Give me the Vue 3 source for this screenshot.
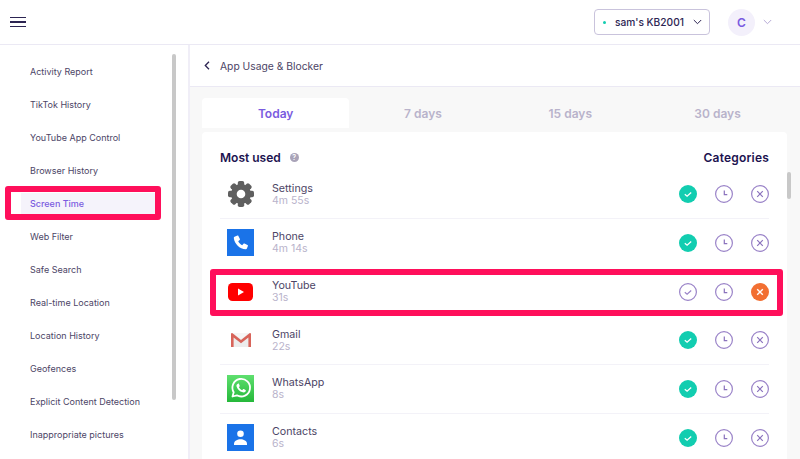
<script setup>
const menu = ['Activity Report','TikTok History','YouTube App Control','Browser History','Screen Time','Web Filter','Safe Search','Real-time Location','Location History','Geofences','Explicit Content Detection','Inappropriate pictures']
const tabs = ['Today','7 days','15 days','30 days']
const teeth = [0,45,90,135,180,225,270,315]
const apps = [
  { name:'Settings', time:'4m 55s', icon:'settings', state:'ok' },
  { name:'Phone', time:'4m 14s', icon:'phone', state:'ok' },
  { name:'YouTube', time:'31s', icon:'youtube', state:'block' },
  { name:'Gmail', time:'22s', icon:'gmail', state:'ok' },
  { name:'WhatsApp', time:'8s', icon:'whatsapp', state:'ok' },
  { name:'Contacts', time:'6s', icon:'contacts', state:'ok' },
]
</script>

<template>
  <div class="page">
    <header class="top">
      <button class="burger" aria-label="Menu"><span></span><span></span><span></span></button>
      <div class="device">
        <i class="dot"></i>
        <span class="device-name">sam's KB2001</span>
        <svg width="9" height="6" viewBox="0 0 9 6"><path d="M.8 1l3.7 3.7L8.2 1" fill="none" stroke="#2c2452" stroke-width="1"/></svg>
      </div>
      <div class="avatar">C</div>
      <svg class="avatar-chev" width="9" height="6" viewBox="0 0 9 6"><path d="M.8 1l3.7 3.7L8.2 1" fill="none" stroke="#b6aad6" stroke-width="1"/></svg>
    </header>

    <div class="body">
      <aside class="side">
        <a v-for="m in menu" :key="m" class="item" :class="{ active: m === 'Screen Time' }">{{ m }}</a>
        <div class="side-scroll"></div>
        <div class="mark mark-side"></div>
      </aside>

      <main class="main">
        <div class="crumb">
          <svg width="6" height="9" viewBox="0 0 6 9"><path d="M5 .8L1.300 4.500 5 8.200" fill="none" stroke="#2c2452" stroke-width="1.300"/></svg>
          <span>App Usage &amp; Blocker</span>
        </div>
        <div class="content">
          <div class="tabs">
            <div v-for="(t,i) in tabs" :key="t" class="tab" :class="{ on: i === 0 }">{{ t }}</div>
          </div>
          <section class="card">
            <div class="head">
              <h3>Most used</h3>
              <span class="help">?</span>
              <h3 class="cat">Categories</h3>
            </div>
            <div v-for="a in apps" :key="a.name" class="row">
              <div class="icon">
                <svg v-if="a.icon==='settings'" width="26" height="26" viewBox="-13 -13 26 26">
                  <g fill="#5f5f5f">
                    <circle r="10"/>
                    <rect v-for="t in teeth" :key="t" x="-3.200" y="-13" width="6.400" height="6" rx="1.800" :transform="`rotate(${t})`"/>
                  </g>
                  <circle r="4.300" fill="#fff"/>
                </svg>
                <svg v-else-if="a.icon==='phone'" width="27" height="27" viewBox="0 0 27 27"><rect width="27" height="27" fill="#1a73e8"/><path fill="#fff" d="M7.500 7.800l3-1.300c.4-.1.700 0 .9.400l1.500 3c.2.400.1.700-.2 1l-1.500 1.300c.9 1.800 2.200 3.100 4 4l1.300-1.500c.3-.3.600-.4 1-.2l3 1.500c.4.200.5.500.4.900l-1 2.700c-.2.500-.6.800-1.200.7C12.600 20 7.500 14.900 6.800 9c-.1-.6.200-1 .7-1.200z"/></svg>
                <svg v-else-if="a.icon==='youtube'" width="25" height="18" viewBox="0 0 25 18"><rect width="25" height="18" rx="4.500" fill="#f00"/><path d="M10 5.500v7l6-3.500z" fill="#fff"/></svg>
                <svg v-else-if="a.icon==='gmail'" width="20" height="14" viewBox="0 0 20 14"><path d="M1 .5h18V14H1z" fill="#ececec"/><path d="M2 0h16L10 6.500z" fill="#f6f6f6"/><path d="M0 1c0-.8.800-1.200 1.500-.7L10 6.900 18.500.3c.7-.5 1.500-.1 1.500.7v13h-2.600V4.600L10 10.200 2.600 4.600V14H0z" fill="#d8645a"/></svg>
                <svg v-else-if="a.icon==='whatsapp'" width="27" height="27" viewBox="0 0 27 27"><defs><linearGradient id="wa" x1="0" y1="0" x2="0" y2="1"><stop offset="0" stop-color="#5fe06f"/><stop offset="1" stop-color="#25b83a"/></linearGradient></defs><rect width="27" height="27" fill="url(#wa)"/><path d="M5.500 21.500l1.200-4.300a8.800 8.800 0 1 1 3.200 3.100z" fill="none" stroke="#fff" stroke-width="1.800" stroke-linejoin="round"/><path fill="#fff" d="M10.900 8.800c.4-.3.900-.3 1.100.2l.7 1.700c.1.300 0 .5-.2.800l-.6.700c.8 1.400 1.800 2.300 3.300 3l.8-.9c.2-.2.500-.3.800-.2l1.700.8c.4.200.5.600.3 1-.6 1.200-1.800 1.700-3 1.400-3.300-.8-5.600-3-6.300-6-.2-1.100.3-2 1.400-2.500z"/></svg>
                <svg v-else width="27" height="27" viewBox="0 0 27 27"><rect width="27" height="27" fill="#1a73e8"/><circle cx="13.500" cy="9.800" r="3.300" fill="#fff"/><path d="M7 19.800c0-3 3.500-4.600 6.500-4.600s6.500 1.600 6.500 4.600V21H7z" fill="#fff"/></svg>
              </div>
              <div class="info">
                <div class="name">{{ a.name }}</div>
                <div class="time">{{ a.time }}</div>
              </div>
              <div class="actions">
                <svg width="18" height="18" viewBox="0 0 18 18">
                  <template v-if="a.state==='ok'"><circle cx="9" cy="9" r="9" fill="#12cdb0"/><path d="M5.800 9.200l2.300 2 4.100-3.700" fill="none" stroke="#fff" stroke-width="1.300"/></template>
                  <template v-else><circle cx="9" cy="9" r="8.400" fill="#fff" stroke="#9a83c8" stroke-width="1.200"/><path d="M5.800 9.200l2.300 2 4.100-3.700" fill="none" stroke="#9a83c8" stroke-width="1.200"/></template>
                </svg>
                <svg width="18" height="18" viewBox="0 0 18 18"><circle cx="9" cy="9" r="8.400" fill="#fff" stroke="#9a83c8" stroke-width="1.200"/><path d="M9.300 5.500v4.200h3" fill="none" stroke="#8a72bd" stroke-width="1.200"/></svg>
                <svg width="18" height="18" viewBox="0 0 18 18">
                  <template v-if="a.state==='block'"><circle cx="9" cy="9" r="9" fill="#f26f32"/><path d="M6.200 6.200l5.600 5.600M11.800 6.200l-5.600 5.600" stroke="#fff" stroke-width="1.400"/></template>
                  <template v-else><circle cx="9" cy="9" r="8.400" fill="#fff" stroke="#9a83c8" stroke-width="1.200"/><path d="M6.200 6.200l5.600 5.600M11.800 6.200l-5.600 5.600" stroke="#8a72bd" stroke-width="1.200"/></template>
                </svg>
              </div>
            </div>
          </section>
          <div class="main-scroll"></div>
          <div class="mark mark-row"></div>
        </div>
      </main>
    </div>
  </div>
</template>

<style>
html, body { margin: 0; overflow: hidden; background: #fff; }
</style>

<style scoped>
.page { width: 800px; height: 459px; overflow: hidden; display: flex; flex-direction: column; font-family: Inter, "Liberation Sans", sans-serif; color: #2c2452; background: #fff; }
.top { height: 44px; flex: none; display: flex; align-items: center; padding: 0 28px 0 10px; border-bottom: 1px solid #ebe9f4; }
.burger { width: 16px; height: 11px; padding: 0; border: 0; background: none; display: flex; flex-direction: column; justify-content: space-between; margin-right: auto; }
.burger span { display: block; height: 1.300px; background: #2c2452; }
.device { width: 116px; height: 26px; box-sizing: border-box; display: flex; align-items: center; border: 1px solid #c9c3dc; border-radius: 4px; padding: 0 7px 0 8px; }
.dot { width: 3px; height: 3px; border-radius: 50%; background: #12cdb0; margin-right: 9px; }
.device-name { font-size: 10.200px; font-weight: 500; color: #2c2452; margin-right: auto; white-space: nowrap; }
.avatar { width: 27px; height: 27px; border-radius: 50%; background: #f3f0fb; color: #7a5be0; font-size: 12px; font-weight: 600; display: flex; align-items: center; justify-content: center; margin-left: 18px; }
.avatar-chev { margin-left: 8px; }
.body { flex: 1; display: flex; min-height: 0; }
.side { position: relative; width: 190px; flex: none; box-sizing: border-box; border-right: 2px solid #f0eef7; padding-top: 10px; }
.item { display: flex; align-items: center; height: 33px; padding-left: 30px; font-size: 9px; color: #4c4566; white-space: nowrap; }
.item.active { color: #7a5be0; font-weight: 500; background: linear-gradient(#f5f3fb, #f5f3fb) 21px 6px / 134px 22px no-repeat; }
.side-scroll { position: absolute; left: 172px; top: 9px; width: 4px; height: 346px; border-radius: 2px; background: #c8c8c8; }
.mark { position: absolute; box-sizing: border-box; border: 6px solid #ff0f5b; border-radius: 3px; pointer-events: none; }
.mark-side { left: 5px; top: 141px; width: 156px; height: 34px; }
.main { flex: 1; min-width: 0; display: flex; flex-direction: column; }
.crumb { height: 42px; flex: none; box-sizing: border-box; display: flex; align-items: center; gap: 10px; padding-left: 14px; border-bottom: 1px solid #ebe9f4; font-size: 10.300px; color: #4c4566; }
.content { position: relative; flex: 1; background: #f8f8f8; padding: 11px 13px 0 12px; min-height: 0; }
.tabs { display: grid; grid-template-columns: repeat(4, 147.300px); height: 30px; margin-bottom: 4px; }
.tab { display: flex; align-items: center; justify-content: center; font-size: 12px; font-weight: 600; color: #b9b3cb; border-radius: 4px 4px 0 0; }
.tab.on { background: #fff; color: #7a5be0; }
.card { background: #fff; border-radius: 4px 4px 0 0; padding: 0 18px; height: 400px; }
.head { height: 38.500px; box-sizing: border-box; padding-top: 13px; display: flex; align-items: center; }
h3 { margin: 0; font-size: 12px; font-weight: 600; color: #1c1350; line-height: 16px; }
.help { width: 9px; height: 9px; margin-left: 9px; border-radius: 50%; background: #a9a3b8; color: #fff; font-size: 7px; font-weight: 600; display: flex; align-items: center; justify-content: center; }
.cat { margin-left: auto; letter-spacing: .2px; }
.row { height: 48.670px; box-sizing: border-box; display: flex; align-items: center; border-bottom: 1px solid #f3f2f8; }
.row:nth-of-type(3), .row:nth-of-type(4) { border-bottom-color: transparent; }
.icon { width: 27px; height: 27px; margin-left: 7px; display: flex; align-items: center; justify-content: center; flex: none; }
.info { margin-left: 18px; padding-top: 1px; line-height: 12px; }
.name { font-size: 10.700px; color: #4c4566; }
.time { font-size: 10.500px; color: #b9b3cb; }
.actions { margin-left: auto; display: flex; gap: 18px; }
.actions svg { display: block; flex: none; }
.main-scroll { position: absolute; right: 9px; top: 85px; width: 4px; height: 27px; border-radius: 2px; background: #c8c8c8; }
.mark-row { left: 20px; top: 182px; width: 573px; height: 47px; }
</style>
